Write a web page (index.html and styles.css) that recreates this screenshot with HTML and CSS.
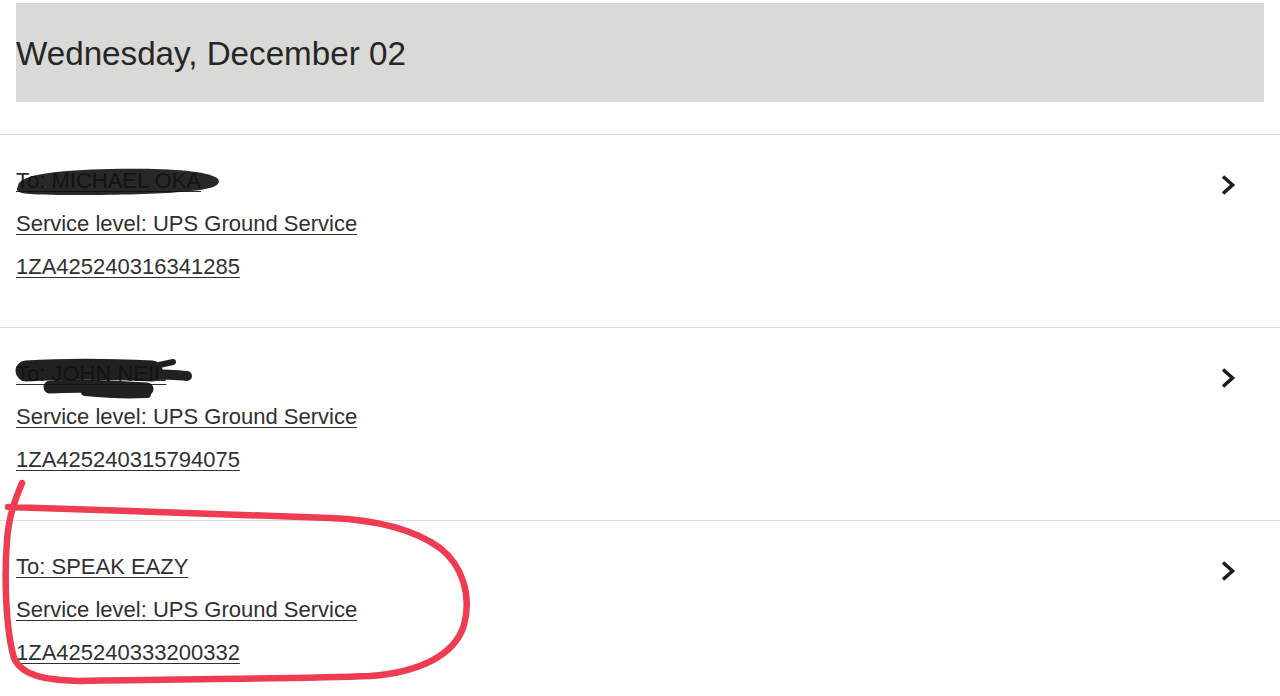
FILE: index.html
```html
<!DOCTYPE html>
<html lang="en">
<head>
<meta charset="utf-8">
<title>Shipments</title>
<link rel="stylesheet" href="styles.css">
</head>
<body>
<div class="page">
  <header class="day-header">
    <h1 class="day-title">Wednesday, December 02</h1>
  </header>
  <ul class="shipments">
    <li class="shipment">
      <div class="shipment-info">
        <a class="line" href="#">To: MICHAEL OKA</a>
        <a class="line" href="#">Service level: UPS Ground Service</a>
        <a class="line" href="#">1ZA425240316341285</a>
      </div>
      <svg class="chevron" viewBox="0 0 16 24" width="16" height="24" aria-hidden="true"><path d="M3 3.5 L12.5 12 L3 20.5" fill="none" stroke="#1e1e1e" stroke-width="3.6" stroke-linejoin="miter"/></svg>
    </li>
    <li class="shipment">
      <div class="shipment-info">
        <a class="line" href="#">To: JOHN NEIL</a>
        <a class="line" href="#">Service level: UPS Ground Service</a>
        <a class="line" href="#">1ZA425240315794075</a>
      </div>
      <svg class="chevron" viewBox="0 0 16 24" width="16" height="24" aria-hidden="true"><path d="M3 3.5 L12.5 12 L3 20.5" fill="none" stroke="#1e1e1e" stroke-width="3.6" stroke-linejoin="miter"/></svg>
    </li>
    <li class="shipment">
      <div class="shipment-info">
        <a class="line" href="#">To: SPEAK EAZY</a>
        <a class="line" href="#">Service level: UPS Ground Service</a>
        <a class="line" href="#">1ZA425240333200332</a>
      </div>
      <svg class="chevron" viewBox="0 0 16 24" width="16" height="24" aria-hidden="true"><path d="M3 3.5 L12.5 12 L3 20.5" fill="none" stroke="#1e1e1e" stroke-width="3.6" stroke-linejoin="miter"/></svg>
    </li>
  </ul>
  <svg class="annotations" viewBox="0 0 1280 696" width="1280" height="696" aria-hidden="true">
    <path fill="#111" opacity="0.9" d="M18 186 C 19 174, 60 170, 110 169 C 160 168, 205 170, 217 178 C 224 185, 212 190, 180 192 C 150 195, 60 196, 30 194 C 16 193, 16 190, 18 186 Z"/>
    <g stroke="#111" stroke-linecap="round" fill="none" opacity="0.93">
      <path d="M26 371 C 60 369, 110 369, 152 371" stroke-width="21"/>
      <path d="M150 367 L173 362" stroke-width="6"/>
      <path d="M118 373 C 140 374, 165 374, 187 376" stroke-width="10"/>
      <path d="M50 387 C 80 385, 120 387, 147 389" stroke-width="13"/>
      <path d="M85 392 C 105 394, 130 395, 147 394" stroke-width="8"/>
    </g>
    <path d="M22 483 C 15 500, 9 515, 7 540 C 4 580, 6 630, 14 658 C 22 676, 45 680, 80 681 C 180 679, 300 679, 370 676 C 420 672, 455 655, 464 625 C 472 595, 462 565, 440 548 C 415 530, 380 520, 330 518 C 250 516, 120 510, 8 507" fill="none" stroke="#f03c52" stroke-width="6.5" stroke-linecap="round" stroke-linejoin="round"/>
  </svg>
</div>
</body>
</html>
```

FILE: styles.css
```css
* { box-sizing: border-box; }

html, body {
  margin: 0;
  padding: 0;
  background: #ffffff;
}

body {
  font-family: "Liberation Sans", Arial, sans-serif;
  color: #2b2b2b;
  width: 1280px;
  height: 696px;
  overflow: hidden;
}

.page {
  position: relative;
  width: 1280px;
  height: 696px;
  padding-top: 3px;
}

.day-header {
  margin: 0 16px;
  height: 99px;
  background: #d9d9d8;
  padding-top: 31px;
}

.day-title {
  margin: 0;
  font-weight: normal;
  font-size: 33.2px;
  line-height: 40px;
  color: #262626;
}

.shipments {
  list-style: none;
  margin: 32px 0 0;
  padding: 0;
}

.shipment {
  display: flex;
  align-items: flex-start;
  justify-content: space-between;
  border-top: 1px solid #dedede;
  padding: 24px 44px 39px 16px;
}

.shipment-info {
  display: flex;
  flex-direction: column;
  align-items: flex-start;
}

.line {
  font-size: 22px;
  line-height: 43px;
  color: #303030;
  text-decoration: underline;
  text-decoration-thickness: 1px;
  text-underline-offset: 3px;
}

.chevron {
  display: block;
  margin-top: 14px;
}

.annotations {
  position: absolute;
  left: 0;
  top: 0;
  pointer-events: none;
}
```
